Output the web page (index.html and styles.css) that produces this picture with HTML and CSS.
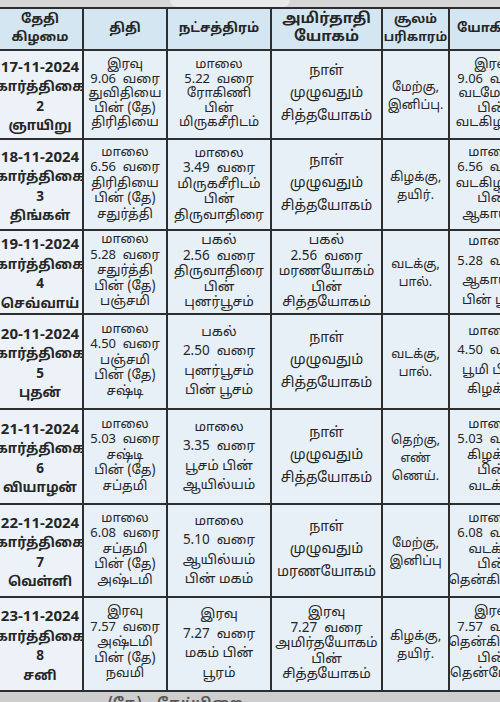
FILE: index.html
```html
<!DOCTYPE html>
<html lang="ta">
<head>
<meta charset="utf-8">
<title>பஞ்சாங்கம்</title>
<link rel="stylesheet" href="styles.css">
</head>
<body>
<div class="page">
  <div class="topband"><span class="glare"></span></div>
  <table class="cal">
    <colgroup>
      <col class="c1"><col class="c2"><col class="c3"><col class="c4"><col class="c5"><col class="c6">
    </colgroup>
    <thead>
      <tr>
        <th>தேதி<br>கிழமை</th>
        <th>திதி</th>
        <th>நட்சத்திரம்</th>
        <th class="big">அமிர்தாதி<br>யோகம்</th>
        <th class="small">சூலம்<br>பரிகாரம்</th>
        <th>யோகினி</th>
      </tr>
    </thead>
    <tbody>
      <tr class="r1">
        <td class="date"><div class="in"><span class="d">17-11-2024</span><span>கார்த்திகை</span><span>2</span><span>ஞாயிறு</span></div></td>
        <td class="l5 tight"><div class="in"><span>இரவு</span><span>9.06&nbsp; வரை</span><span>துவிதியை</span><span>பின் (தே)</span><span>திரிதியை</span></div></td>
        <td class="l5 tight star"><div class="in"><span>மாலை</span><span>5.22&nbsp; வரை</span><span>ரோகிணி</span><span>பின்</span><span>மிருகசீரிடம்</span></div></td>
        <td class="l3 yog"><div class="in"><span>நாள்</span><span>முழுவதும்</span><span>சித்தயோகம்</span></div></td>
        <td class="l2"><div class="in"><span>மேற்கு,</span><span>இனிப்பு.</span></div></td>
        <td class="l5 tight"><div class="in"><span>இரவு</span><span>9.06&nbsp; வரை</span><span>வடமேற்கு</span><span>பின்</span><span>வடகிழக்கு</span></div></td>
      </tr>
      <tr class="r2">
        <td class="date"><div class="in"><span class="d">18-11-2024</span><span>கார்த்திகை</span><span>3</span><span>திங்கள்</span></div></td>
        <td class="l5"><div class="in"><span>மாலை</span><span>6.56&nbsp; வரை</span><span>திரிதியை</span><span>பின் (தே)</span><span>சதுர்த்தி</span></div></td>
        <td class="l5 star"><div class="in"><span>மாலை</span><span>3.49&nbsp; வரை</span><span>மிருகசீரிடம்</span><span>பின்</span><span>திருவாதிரை</span></div></td>
        <td class="l3 yog"><div class="in"><span>நாள்</span><span>முழுவதும்</span><span>சித்தயோகம்</span></div></td>
        <td class="l2"><div class="in"><span>கிழக்கு,</span><span>தயிர்.</span></div></td>
        <td class="l5"><div class="in"><span>மாலை</span><span>6.56&nbsp; வரை</span><span>வடகிழக்கு</span><span>பின்</span><span>ஆகாயம்</span></div></td>
      </tr>
      <tr class="r3">
        <td class="date"><div class="in"><span class="d">19-11-2024</span><span>கார்த்திகை</span><span>4</span><span>செவ்வாய்</span></div></td>
        <td class="l5"><div class="in"><span>மாலை</span><span>5.28&nbsp; வரை</span><span>சதுர்த்தி</span><span>பின் (தே)</span><span>பஞ்சமி</span></div></td>
        <td class="l5 star"><div class="in"><span>பகல்</span><span>2.56&nbsp; வரை</span><span>திருவாதிரை</span><span>பின்</span><span>புனர்பூசம்</span></div></td>
        <td class="l5 yog"><div class="in"><span>பகல்</span><span>2.56&nbsp; வரை</span><span>மரணயோகம்</span><span>பின்</span><span>சித்தயோகம்</span></div></td>
        <td class="l2"><div class="in"><span>வடக்கு,</span><span>பால்.</span></div></td>
        <td class="l4"><div class="in"><span>மாலை</span><span>5.28&nbsp; வரை</span><span>ஆகாயம்</span><span>பின் பூமி</span></div></td>
      </tr>
      <tr class="r4">
        <td class="date"><div class="in"><span class="d">20-11-2024</span><span>கார்த்திகை</span><span>5</span><span>புதன்</span></div></td>
        <td class="l5"><div class="in"><span>மாலை</span><span>4.50&nbsp; வரை</span><span>பஞ்சமி</span><span>பின் (தே)</span><span>சஷ்டி</span></div></td>
        <td class="l4 star"><div class="in"><span>பகல்</span><span>2.50&nbsp; வரை</span><span>புனர்பூசம்</span><span>பின் பூசம்</span></div></td>
        <td class="l3 yog"><div class="in"><span>நாள்</span><span>முழுவதும்</span><span>சித்தயோகம்</span></div></td>
        <td class="l2"><div class="in"><span>வடக்கு,</span><span>பால்.</span></div></td>
        <td class="l4"><div class="in"><span>மாலை</span><span>4.50&nbsp; வரை</span><span>பூமி பின்</span><span>கிழக்கு</span></div></td>
      </tr>
      <tr class="r5">
        <td class="date"><div class="in"><span class="d">21-11-2024</span><span>கார்த்திகை</span><span>6</span><span>வியாழன்</span></div></td>
        <td class="l5"><div class="in"><span>மாலை</span><span>5.03&nbsp; வரை</span><span>சஷ்டி</span><span>பின் (தே)</span><span>சப்தமி</span></div></td>
        <td class="l4 star"><div class="in"><span>மாலை</span><span>3.35&nbsp; வரை</span><span>பூசம் பின்</span><span>ஆயில்யம்</span></div></td>
        <td class="l3 yog"><div class="in"><span>நாள்</span><span>முழுவதும்</span><span>சித்தயோகம்</span></div></td>
        <td class="l2"><div class="in"><span>தெற்கு,</span><span>எண்</span><span>ணெய்.</span></div></td>
        <td class="l5"><div class="in"><span>மாலை</span><span>5.03&nbsp; வரை</span><span>கிழக்கு</span><span>பின்</span><span>வடக்கு</span></div></td>
      </tr>
      <tr class="r6">
        <td class="date"><div class="in"><span class="d">22-11-2024</span><span>கார்த்திகை</span><span>7</span><span>வெள்ளி</span></div></td>
        <td class="l5"><div class="in"><span>மாலை</span><span>6.08&nbsp; வரை</span><span>சப்தமி</span><span>பின் (தே)</span><span>அஷ்டமி</span></div></td>
        <td class="l4 star"><div class="in"><span>மாலை</span><span>5.10&nbsp; வரை</span><span>ஆயில்யம்</span><span>பின் மகம்</span></div></td>
        <td class="l3 yog"><div class="in"><span>நாள்</span><span>முழுவதும்</span><span>மரணயோகம்</span></div></td>
        <td class="l2"><div class="in"><span>மேற்கு,</span><span>இனிப்பு</span></div></td>
        <td class="l5"><div class="in"><span>மாலை</span><span>6.08&nbsp; வரை</span><span>வடக்கு</span><span>பின்</span><span>தென்கிழக்கு</span></div></td>
      </tr>
      <tr class="r7">
        <td class="date"><div class="in"><span class="d">23-11-2024</span><span>கார்த்திகை</span><span>8</span><span>சனி</span></div></td>
        <td class="l5"><div class="in"><span>இரவு</span><span>7.57&nbsp; வரை</span><span>அஷ்டமி</span><span>பின் (தே)</span><span>நவமி</span></div></td>
        <td class="l4 star"><div class="in"><span>இரவு</span><span>7.27&nbsp; வரை</span><span>மகம் பின்</span><span>பூரம்</span></div></td>
        <td class="l5 yog"><div class="in"><span>இரவு</span><span>7.27&nbsp; வரை</span><span>அமிர்தயோகம்</span><span>பின்</span><span>சித்தயோகம்</span></div></td>
        <td class="l2"><div class="in"><span>கிழக்கு,</span><span>தயிர்.</span></div></td>
        <td class="l5"><div class="in"><span>இரவு</span><span>7.57&nbsp; வரை</span><span>தென்கிழக்கு</span><span>பின்</span><span>தென்மேற்கு</span></div></td>
      </tr>
    </tbody>
  </table>
  <div class="foot"><span class="note">(தே) - தேய்பிறை</span></div>
</div>
</body>
</html>
```
FILE: styles.css
```css
html, body {
  margin: 0;
  padding: 0;
  background: #d2d1d1;
}
.page {
  width: 500px;
  height: 702px;
  overflow: hidden;
  background: #d2d1d1;
  font-family: "Noto Sans Tamil", "Lohit Tamil", "Noto Sans", "Liberation Sans", sans-serif;
  color: #262626;
}
.topband {
  height: 7px;
  background: #d6d6d6;
  display: flex;
  justify-content: center;
}
.glare {
  width: 120px;
  height: 7px;
  margin-left: -40px;
  border-radius: 0 0 60px 60px;
  background: #e9e9e9;
}
.cal {
  margin-left: -4px;
  border-collapse: collapse;
  table-layout: fixed;
  width: 538px;
}
.c1 { width: 86px; }
.c2 { width: 84px; }
.c3 { width: 104px; }
.c4 { width: 111px; }
.c5 { width: 67px; }
.c6 { width: 86px; }
.cal th, .cal td {
  border: 2px solid #2e2e2e;
  text-align: center;
  vertical-align: middle;
  padding: 0;
  overflow: hidden;
  white-space: nowrap;
}
.cal th {
  height: 40px;
  background: #d4e6f2;
  font-size: 13px;
  font-weight: bold;
  line-height: 18px;
}
.cal th.big { font-size: 15px; }
.cal th.small { font-size: 12.5px; }
.cal td {
  background: #e8f0f7;
  font-size: 13px;
}
.in {
  display: flex;
  flex-direction: column;
  justify-content: center;
  align-items: center;
  overflow: visible;
}
.in span {
  display: block;
  white-space: nowrap;
}
.r1 .in { height: 87px; }
.r2 .in { height: 89px; }
.r3 .in { height: 82px; }
.r4 .in { height: 93px; }
.r5 .in { height: 93px; }
.r6 .in { height: 91px; }
.r7 .in { height: 92px; }

.cal td.date {
  background: #ecf2f8;
  font-size: 13.5px;
  font-weight: bold;
}
.date .in { padding-top: 6px; box-sizing: border-box; }
.date span { height: 19.5px; line-height: 19.5px; }
.date .d { font-size: 15px; }

.l5 span { height: 15.5px; line-height: 15.5px; }
.tight span { height: 14.5px; line-height: 14.5px; }
.l4 span { height: 19.5px; line-height: 19.5px; }
.l3 span { height: 22.5px; line-height: 22.5px; }
.l2 span { height: 18px; line-height: 18px; }
.l2 .in { padding-top: 4px; box-sizing: border-box; }
.cal td.star { font-size: 13.5px; }
.cal td.tight.star { font-size: 13px; }
.cal td.yog { font-size: 14px; }
.cal td.l5.yog { font-size: 13.5px; }
.cal td.l2 { font-size: 12.5px; }

.foot {
  height: 20px;
  background: #cfcece;
  padding-left: 108px;
}
.note {
  display: block;
  padding-top: 4px;
  font-size: 14px;
  font-weight: bold;
  color: #555555;
  word-spacing: 2px;
}
```
